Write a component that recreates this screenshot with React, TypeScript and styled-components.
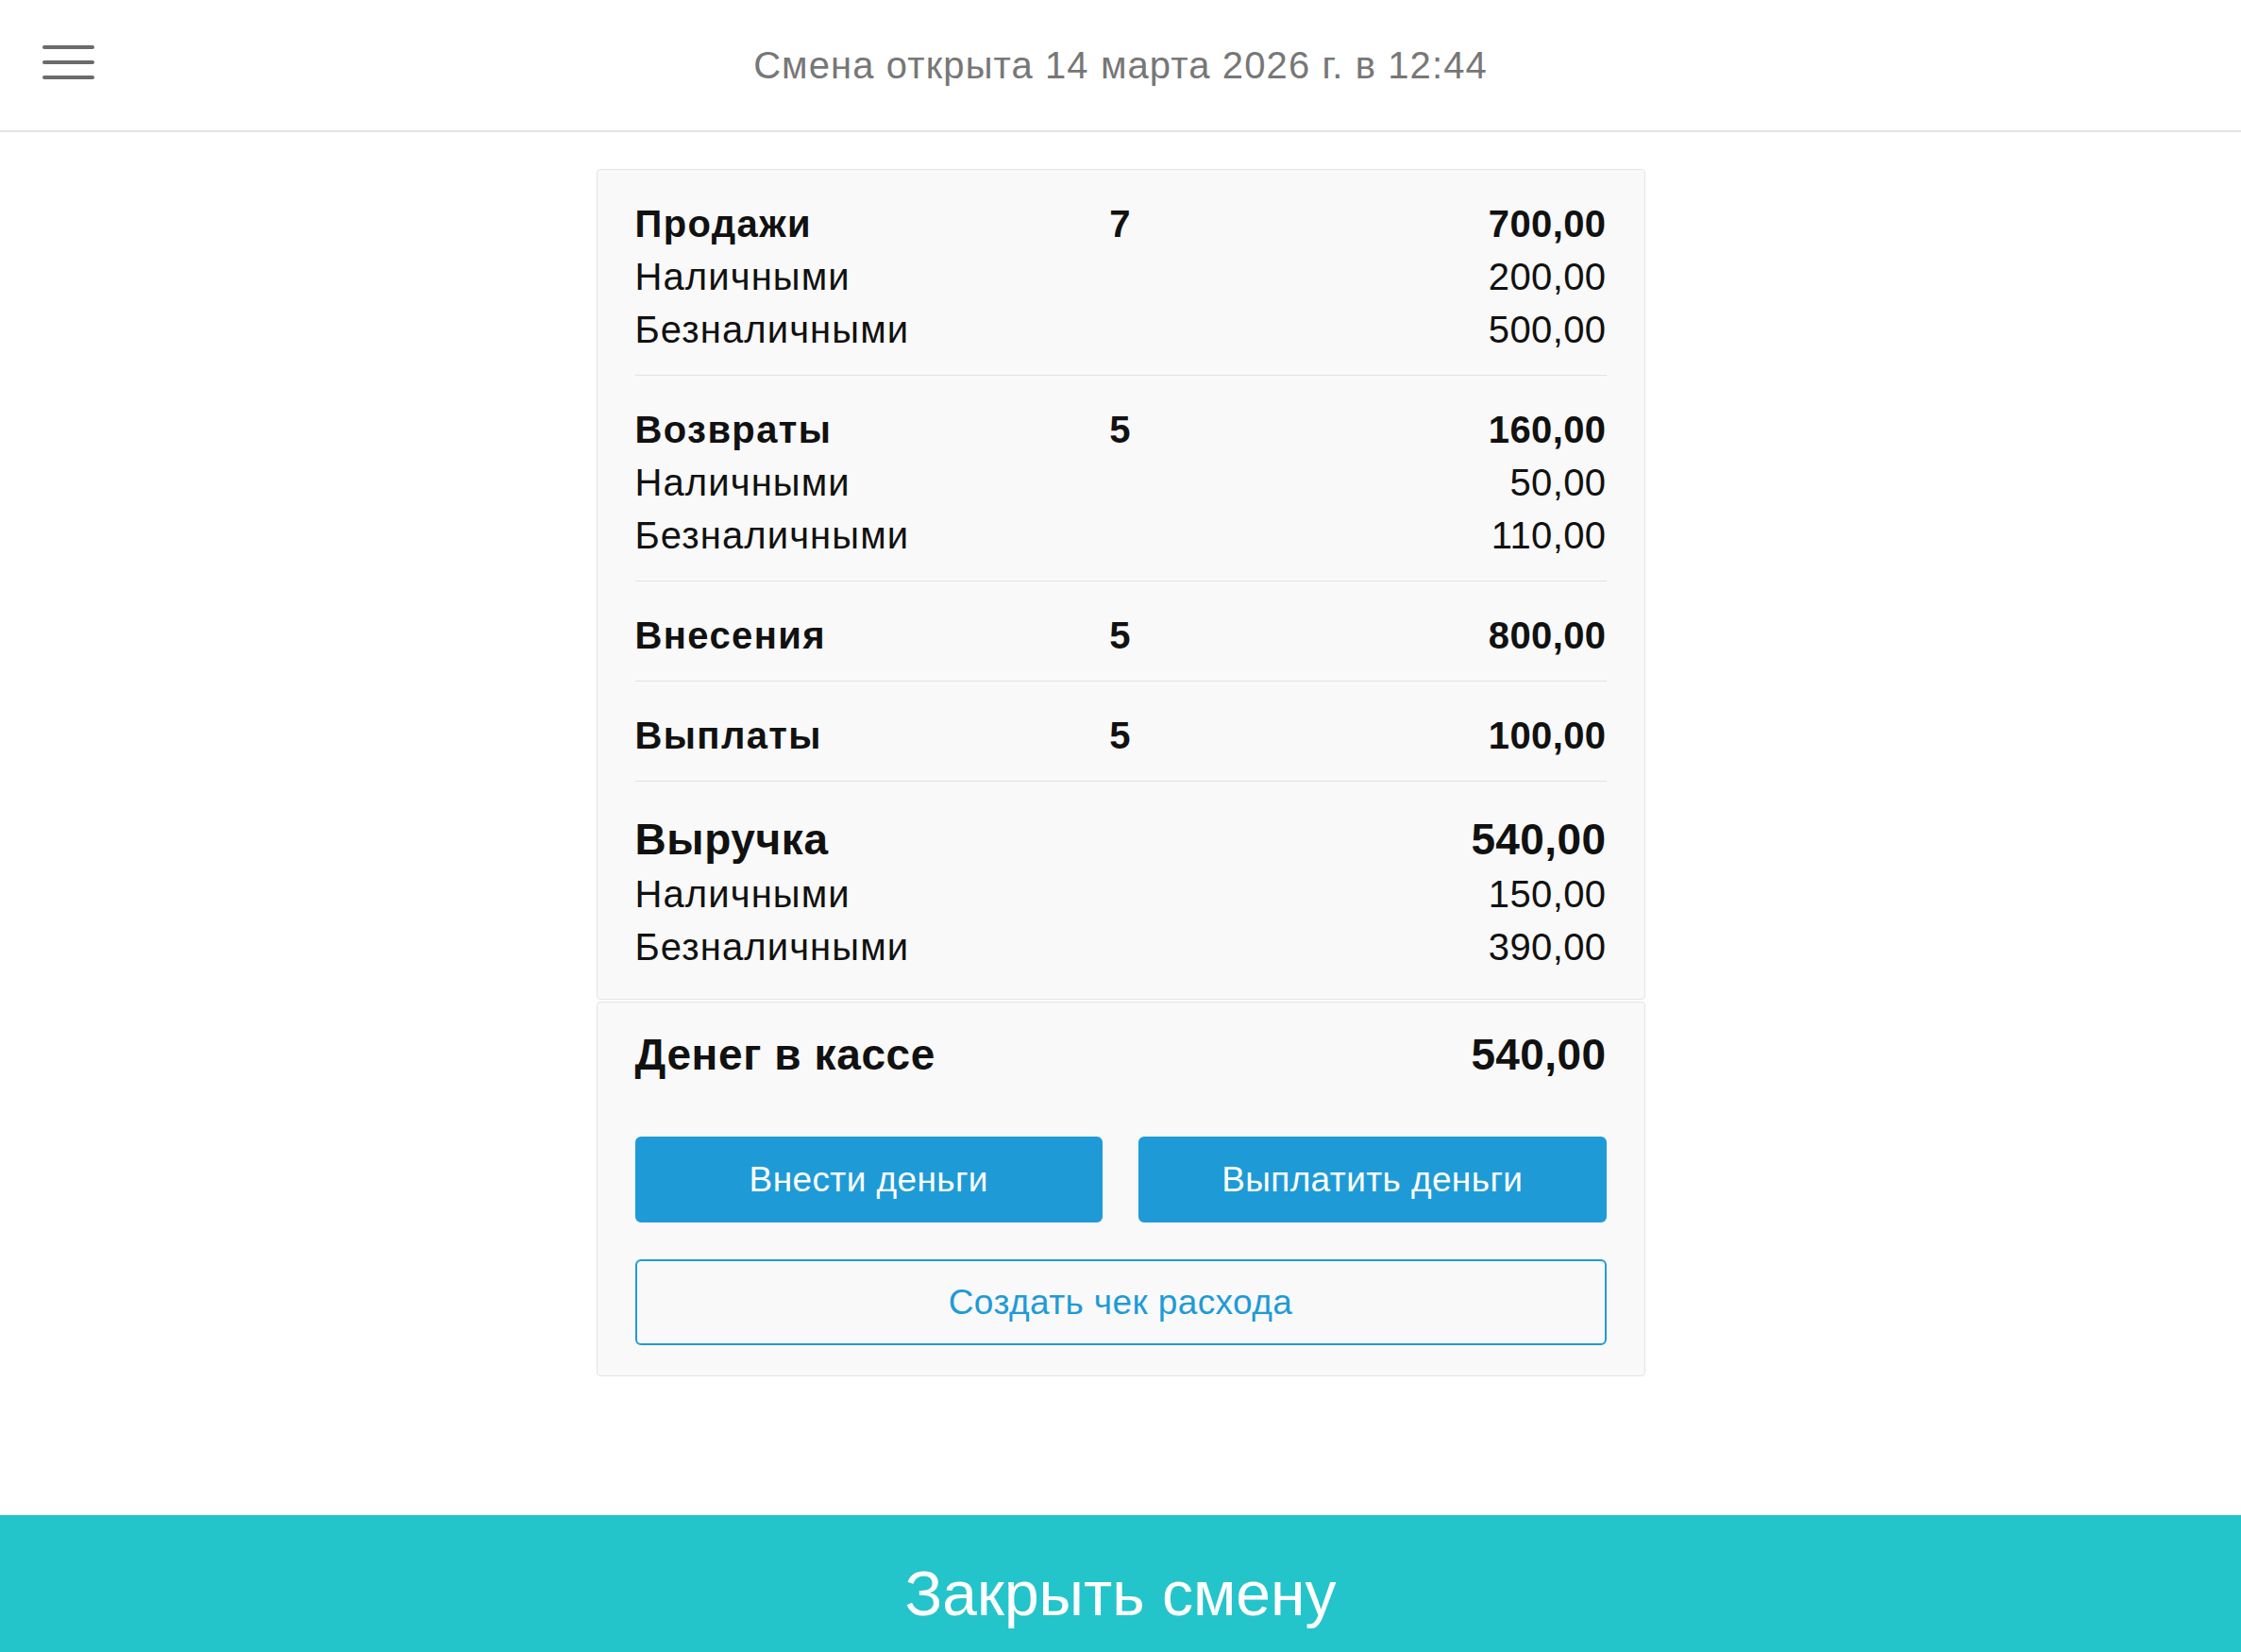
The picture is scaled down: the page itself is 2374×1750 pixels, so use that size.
import React from 'react';
import styled, { createGlobalStyle } from 'styled-components';

type Line = [string, string];

interface Section {
  title: string;
  count?: number;
  total: string;
  big?: boolean;
  lines?: Line[];
}

const sections: Section[] = [
  {
    title: 'Продажи',
    count: 7,
    total: '700,00',
    lines: [
      ['Наличными', '200,00'],
      ['Безналичными', '500,00'],
    ],
  },
  {
    title: 'Возвраты',
    count: 5,
    total: '160,00',
    lines: [
      ['Наличными', '50,00'],
      ['Безналичными', '110,00'],
    ],
  },
  { title: 'Внесения', count: 5, total: '800,00' },
  { title: 'Выплаты', count: 5, total: '100,00' },
  {
    title: 'Выручка',
    total: '540,00',
    big: true,
    lines: [
      ['Наличными', '150,00'],
      ['Безналичными', '390,00'],
    ],
  },
];

const App: React.FC = () => {
  return (
    <Page>
      <GlobalStyle />
      <Header>
        <MenuButton aria-label="Меню">
          <MenuBar />
          <MenuBar />
          <MenuBar />
        </MenuButton>
        <ShiftTitle>Смена открыта 14 марта 2026 г. в 12:44</ShiftTitle>
        <span />
      </Header>

      <Main>
        <Report>
          <Panel>
            {sections.map((s) => (
              <Group key={s.title}>
                <Row $kind={s.big ? 'big' : 'head'}>
                  <Label>{s.title}</Label>
                  <Count>{s.count ?? ''}</Count>
                  <Amount>{s.total}</Amount>
                </Row>
                {s.lines?.map(([label, value]) => (
                  <Row key={label} $kind="sub">
                    <Label>{label}</Label>
                    <Count />
                    <Amount>{value}</Amount>
                  </Row>
                ))}
              </Group>
            ))}
          </Panel>

          <CashPanel>
            <Row $kind="big">
              <Label>Денег в кассе</Label>
              <Count />
              <Amount>540,00</Amount>
            </Row>
            <Actions>
              <Button>Внести деньги</Button>
              <Button>Выплатить деньги</Button>
              <Button $outline $wide>
                Создать чек расхода
              </Button>
            </Actions>
          </CashPanel>
        </Report>
      </Main>

      <Footer>
        <CloseShift>Закрыть смену</CloseShift>
      </Footer>
    </Page>
  );
};

// Styled components
const GlobalStyle = createGlobalStyle`
  html, body {
    margin: 0;
    padding: 0;
    background: #fff;
  }
  body {
    font-family: 'Liberation Sans', Arial, Helvetica, sans-serif;
    color: #111;
  }
  * {
    box-sizing: border-box;
  }
`;

const Page = styled.div`
  min-height: 100vh;
  display: flex;
  flex-direction: column;
  overflow: hidden;
`;

const Header = styled.header`
  height: 140px;
  display: grid;
  grid-template-columns: 1fr auto 1fr;
  align-items: center;
  border-bottom: 2px solid #e4e4e4;
  background: #fff;
`;

const MenuButton = styled.button`
  justify-self: start;
  margin: -6px 0 0 45px;
  padding: 0;
  width: 55px;
  display: flex;
  flex-direction: column;
  gap: 12px;
  border: none;
  background: none;
  cursor: pointer;
`;

const MenuBar = styled.span`
  display: block;
  height: 4px;
  width: 55px;
  border-radius: 2px;
  background: #6b6b6b;
`;

const ShiftTitle = styled.h1`
  margin: 0;
  font-size: 40px;
  line-height: 40px;
  font-weight: 400;
  letter-spacing: 1.1px;
  color: #777;
  white-space: nowrap;
`;

const Main = styled.main`
  flex: 1;
  display: flex;
  justify-content: center;
  padding-top: 39px;
`;

const Report = styled.div`
  width: 1111px;
  display: flex;
  flex-direction: column;
  gap: 2px;
`;

const Panel = styled.section`
  background: #f9f9f9;
  border: 1px solid #e4e4e4;
  border-radius: 4px;
  padding: 0 40px 7px;
`;

const Group = styled.div`
  padding: 29px 0 20px;
  border-bottom: 1px solid #e2e2e2;

  &:last-child {
    border-bottom: none;
    padding-top: 31px;
  }
`;

const Row = styled.div<{ $kind: 'head' | 'big' | 'sub' }>`
  display: grid;
  grid-template-columns: 1fr 1fr 1fr;
  align-items: baseline;
  font-size: ${(p) => (p.$kind === 'big' ? '46px' : '40px')};
  line-height: ${(p) => (p.$kind === 'big' ? '60px' : '56px')};
  font-weight: ${(p) => (p.$kind === 'sub' ? 400 : 700)};
  letter-spacing: ${(p) => (p.$kind === 'sub' ? '1.1px' : p.$kind === 'head' ? '1.4px' : '0.6px')};
  color: #111;
`;

const Label = styled.span`
  white-space: nowrap;
`;

const Count = styled.span`
  text-align: center;
`;

const Amount = styled.span`
  text-align: right;
  letter-spacing: 0.4px;
`;

const CashPanel = styled(Panel)`
  padding: 25px 40px 32px;
`;

const Actions = styled.div`
  margin-top: 57px;
  display: grid;
  grid-template-columns: 1fr 1fr;
  column-gap: 38px;
  row-gap: 39px;
`;

const Button = styled.button<{ $outline?: boolean; $wide?: boolean }>`
  grid-column: ${(p) => (p.$wide ? '1 / -1' : 'auto')};
  height: 91px;
  border-radius: 6px;
  border: 2px solid #1e9bd7;
  background: ${(p) => (p.$outline ? 'transparent' : '#1e9bd7')};
  color: ${(p) => (p.$outline ? '#1e9bd7' : '#fff')};
  font-family: 'Liberation Sans', Arial, Helvetica, sans-serif;
  font-size: 37px;
  font-weight: 400;
  letter-spacing: 0.4px;
  cursor: pointer;
`;

const Footer = styled.footer`
  height: 145px;
  flex-shrink: 0;
  display: flex;
  justify-content: center;
  align-items: flex-start;
  padding-top: 50px;
  background: #24c4cb;
`;

const CloseShift = styled.span`
  font-size: 66px;
  line-height: 66px;
  color: #fff;
`;

export default App;
